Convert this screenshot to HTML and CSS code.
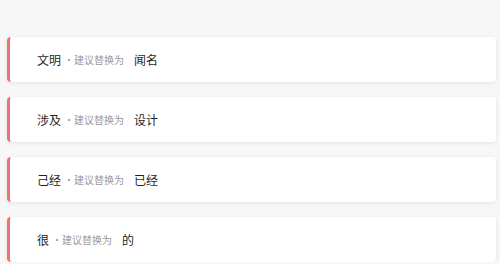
FILE: index.html
```html
<!DOCTYPE html>
<html lang="zh">
<head>
<meta charset="utf-8">
<link rel="stylesheet" href="styles.css">
</head>
<body>
<div class="list">
  <div class="card"><span class="word">文明</span><span class="hint">·建议替换为</span><span class="word">闻名</span></div>
  <div class="card"><span class="word">涉及</span><span class="hint">·建议替换为</span><span class="word">设计</span></div>
  <div class="card"><span class="word">己经</span><span class="hint">·建议替换为</span><span class="word">已经</span></div>
  <div class="card"><span class="word">很</span><span class="hint">·建议替换为</span><span class="word">的</span></div>
</div>
</body>
</html>
```
FILE: styles.css
```css
html, body {
  margin: 0;
  padding: 0;
  background: #f7f7f7;
  font-family: "Noto Sans CJK SC", "Noto Sans", sans-serif;
}
.list {
  display: flex;
  flex-direction: column;
  gap: 15px;
  padding: 37px 4px 0 7px;
}
.card {
  height: 45px;
  box-sizing: border-box;
  background: #fff;
  border-left: 3px solid #f07171;
  border-radius: 4px;
  box-shadow: 0 1px 4px rgba(0, 0, 0, 0.08);
  display: flex;
  align-items: center;
  padding-left: 27px;
}
.word {
  font-size: 12px;
  color: #1f1f1f;
}
.hint {
  font-size: 10px;
  color: #999;
  margin: 0 10px 0 3px;
}
```
